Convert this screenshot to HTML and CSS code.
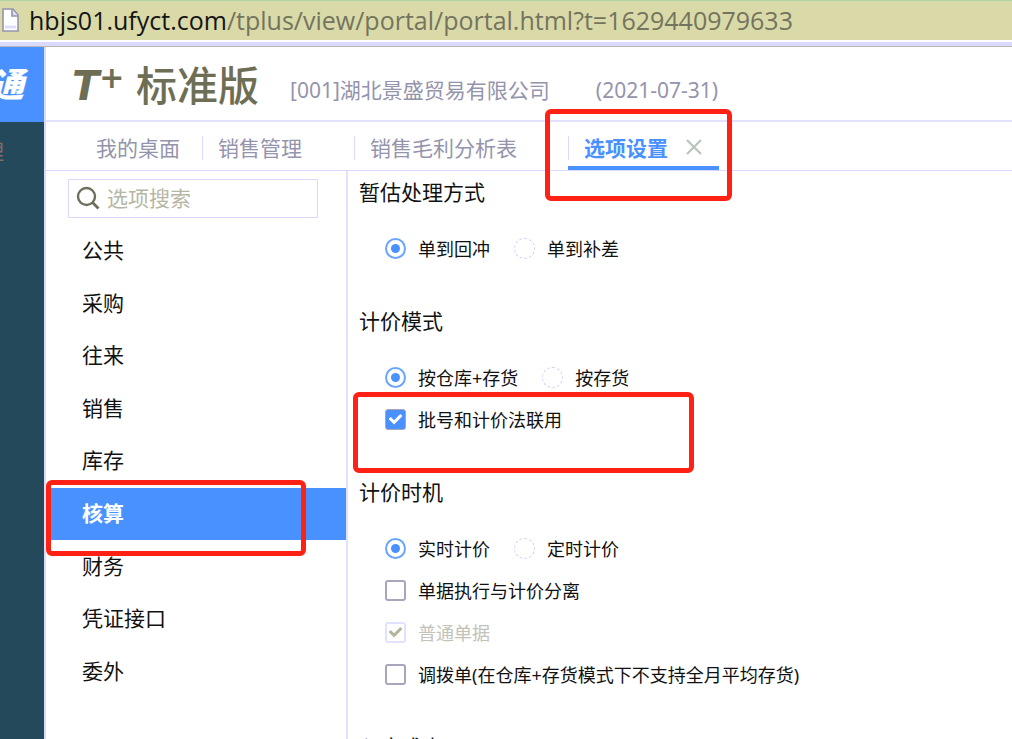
FILE: index.html
```html
<!DOCTYPE html>
<html lang="zh-CN">
<head>
<meta charset="utf-8">
<title>T+ 标准版 选项设置</title>
<link rel="stylesheet" href="styles.css">
</head>
<body>
<div class="address-bar">
  <svg class="page-icon" width="20" height="26" viewBox="0 0 20 26" aria-hidden="true">
    <path d="M3 2h10l5 6v16H3z" fill="#fff" stroke="#9494ac" stroke-width="1.6"/>
    <path d="M12 2v7h6" fill="#dcdcf8" stroke="#9494ac" stroke-width="1.6"/>
    <path d="M5 20h11" stroke="#dcdcff" stroke-width="3"/>
  </svg>
  <span class="url"><span class="host">hbjs01.ufyct.com</span>/tplus/view/portal/portal.html?t=1629440979633</span>
</div>
<div class="app">
  <aside class="rail">
    <div class="brand"><span>通</span></div>
    <div class="rail-item"><span>理</span></div>
  </aside>
  <div class="workspace">
    <header class="top">
      <span class="logo">T<sup>+</sup></span>
      <h1 class="product">标准版</h1>
      <span class="company">[001]湖北景盛贸易有限公司</span>
      <span class="date">(2021-07-31)</span>
    </header>
    <nav class="tabs">
      <button class="tab tab-home">我的桌面</button>
      <button class="tab tab-sales">销售管理</button>
      <button class="tab tab-report">销售毛利分析表</button>
      <div class="tab tab-active">
        <button class="tab-title">选项设置</button>
        <button class="tab-close" aria-label="关闭">
          <svg width="18" height="18" viewBox="0 0 18 18"><path d="M2 2l14 14M16 2L2 16" stroke="#b8c4bc" stroke-width="2.2"/></svg>
        </button>
      </div>
    </nav>
    <div class="body">
      <div class="side">
        <label class="search">
          <svg width="24" height="24" viewBox="0 0 24 24" aria-hidden="true"><circle cx="10.500" cy="10.500" r="8.500" fill="none" stroke="#6e6e5c" stroke-width="2.400"/><path d="M16.500 16.500l6 6" stroke="#6e6e5c" stroke-width="2.800"/></svg>
          <input type="text" placeholder="选项搜索" aria-label="选项搜索">
        </label>
        <div class="menu">
          <button class="item">公共</button>
          <button class="item">采购</button>
          <button class="item">往来</button>
          <button class="item">销售</button>
          <button class="item">库存</button>
          <button class="item selected">核算</button>
          <button class="item">财务</button>
          <button class="item">凭证接口</button>
          <button class="item">委外</button>
        </div>
      </div>
      <main class="options">
        <section>
          <h2>暂估处理方式</h2>
          <div class="row">
            <label class="choice"><input type="radio" name="estimate" checked>单到回冲</label>
            <label class="choice"><input type="radio" name="estimate">单到补差</label>
          </div>
        </section>
        <section>
          <h2>计价模式</h2>
          <div class="row">
            <label class="choice"><input type="radio" name="mode" checked>按仓库+存货</label>
            <label class="choice"><input type="radio" name="mode">按存货</label>
          </div>
          <div class="row"><label class="choice"><input type="checkbox" checked>批号和计价法联用</label></div>
        </section>
        <section>
          <h2>计价时机</h2>
          <div class="row">
            <label class="choice"><input type="radio" name="timing" checked>实时计价</label>
            <label class="choice"><input type="radio" name="timing">定时计价</label>
          </div>
          <div class="row"><label class="choice"><input type="checkbox">单据执行与计价分离</label></div>
          <div class="row"><label class="choice off"><input type="checkbox" checked disabled>普通单据</label></div>
          <div class="row"><label class="choice"><input type="checkbox">调拨单(在仓库+存货模式下不支持全月平均存货)</label></div>
        </section>
        <section>
          <h2>入库成本</h2>
        </section>
      </main>
    </div>
  </div>
</div>
<div class="mark mark-tab"></div>
<div class="mark mark-option"></div>
<div class="mark mark-menu"></div>
</body>
</html>
```
FILE: styles.css
```css
* { box-sizing: border-box; }
body {
  margin: 0;
  height: 100vh;
  overflow: hidden;
  position: relative;
  display: flex;
  flex-direction: column;
  background: #fff;
  color: #111;
  font-family: "Noto Sans", "Noto Sans CJK SC", sans-serif;
  font-size: 21px;
}
button {
  border: 0;
  padding: 0;
  background: none;
  font: inherit;
  color: inherit;
  cursor: pointer;
}
svg { display: block; flex: none; }

.address-bar {
  flex: none;
  height: 47px;
  display: flex;
  align-items: center;
  gap: 9px;
  background: #dadaa9;
  border-top: 1px solid #aed4a4;
  border-bottom: 1px solid #b8b8b8;
  box-shadow: inset 0 -4px #dadaff, inset 0 -6px #fff;
  padding-bottom: 8px;
  white-space: nowrap;
}
.url { font-family: "Open Sans", sans-serif; font-size: 25px; line-height: 36px; color: #74745e; }
.host { color: #141414; }

.app { flex: 1; min-height: 0; display: flex; }
.rail { flex: none; width: 44px; background: #24495a; }
.brand, .rail-item { display: flex; justify-content: flex-end; align-items: center; overflow: hidden; }
.brand {
  height: 75px;
  padding: 0 20px 4px 0;
  background: #4891ff;
  color: #fff;
  font-size: 34px;
  font-weight: 900;
  font-style: italic;
}
.rail-item { height: 56px; padding-right: 40px; color: #866e63; }

.workspace { flex: 1; min-width: 0; display: flex; flex-direction: column; border-left: 2px solid #dadaff; }
.top {
  flex: none;
  height: 75px;
  display: flex;
  align-items: center;
  padding-left: 26px;
  border-bottom: 2px solid #e2e2ff;
  color: #9494ac;
  white-space: nowrap;
}
.logo {
  display: flex;
  align-items: flex-start;
  width: 56px;
  margin-top: 4px;
  font: italic 700 40px/40px "DejaVu Sans", sans-serif;
  color: #6e6e55;
}
.logo sup { font-size: 30px; line-height: 24px; }
.product { margin: 2px 0 0 8px; font-size: 41px; line-height: 48px; font-weight: 500; color: #6e6e55; }
.company { margin: 10px 0 0 31px; }
.date { margin: 12px 0 0 46px; }

.tabs {
  flex: none;
  height: 49px;
  display: flex;
  align-items: stretch;
  padding-left: 50px;
  border-bottom: 1px solid #dadaff;
  color: #9494ac;
  white-space: nowrap;
}
.tab { display: flex; align-items: center; padding-top: 2px; }
.tab + .tab {
  padding-left: 16px;
  background: linear-gradient(#dadaff, #dadaff) 0 14px / 1px 24px no-repeat;
}
.tab-home { width: 106px; }
.tab-sales { width: 152px; }
.tab-report { width: 214px; }
.tab-active { width: 151px; gap: 17px; border-bottom: 4px solid #4891ff; color: #4891ff; padding-top: 6px; }
.tab-title { font-weight: 700; }

.body { flex: 1; min-height: 0; display: flex; }
.side { flex: none; width: 302px; padding-top: 8px; border-right: 2px solid #e2e2ff; }
.search {
  display: flex;
  align-items: center;
  gap: 7px;
  height: 39px;
  margin: 0 28px 0 22px;
  padding: 0 0 2px 7px;
  border: 1px solid #dadaff;
}
.search input { flex: 1; min-width: 0; border: 0; padding: 0; outline: 0; font: inherit; line-height: 28px; }
.search input::placeholder { color: #b6b6a4; opacity: 1; }
.menu { display: grid; grid-auto-rows: 1fr; height: 473px; margin-top: 7px; }
.item { padding: 0 0 4px 36px; text-align: left; }
.selected { background: #4891ff; color: #fff; font-weight: 700; }

.options { flex: 1; min-width: 0; padding: 6px 0 0 11px; overflow: hidden; }
section { margin-bottom: 37px; }
h2 { margin: 0 0 20px; font-size: 21px; line-height: 30px; font-weight: 400; }
.row { display: flex; gap: 24px; height: 42px; padding-left: 26px; }
.choice { display: flex; align-items: center; gap: 12px; font-size: 18px; white-space: nowrap; }
.choice input {
  appearance: none;
  display: grid;
  place-content: center;
  width: 21px;
  height: 21px;
  margin: 0;
  border: 2px solid #a6a6bc;
  border-radius: 3px;
}
.choice input[type="radio"] { border: 1px dashed #cfcffc; border-radius: 50%; }
.choice input[type="radio"]:checked { border: 2px solid #69a5ff; }
.choice input[type="radio"]:checked::before { content: ""; width: 9px; height: 9px; border-radius: 50%; background: #4891ff; }
.choice input[type="checkbox"]:checked { background: #4891ff; border-width: 1px; }
.choice input[type="checkbox"]:checked::before {
  content: "";
  width: 14px;
  height: 12px;
  background: #fff;
  clip-path: polygon(0 50%, 16% 34%, 40% 60%, 84% 8%, 100% 24%, 40% 96%);
}
.choice input:disabled:checked { background: #fff; border: 2px solid #e2e2ff; }
.choice input[type="checkbox"]:disabled:checked::before { background: #b6b69c; }
.off { color: #c2c2b8; }

.mark { position: absolute; border: 5px solid #ff2113; border-radius: 6px; pointer-events: none; }
.mark-tab { left: 545px; top: 109px; width: 187px; height: 92px; }
.mark-option { left: 353px; top: 392px; width: 341px; height: 81px; }
.mark-menu { left: 46px; top: 480px; width: 260px; height: 76px; }
```
